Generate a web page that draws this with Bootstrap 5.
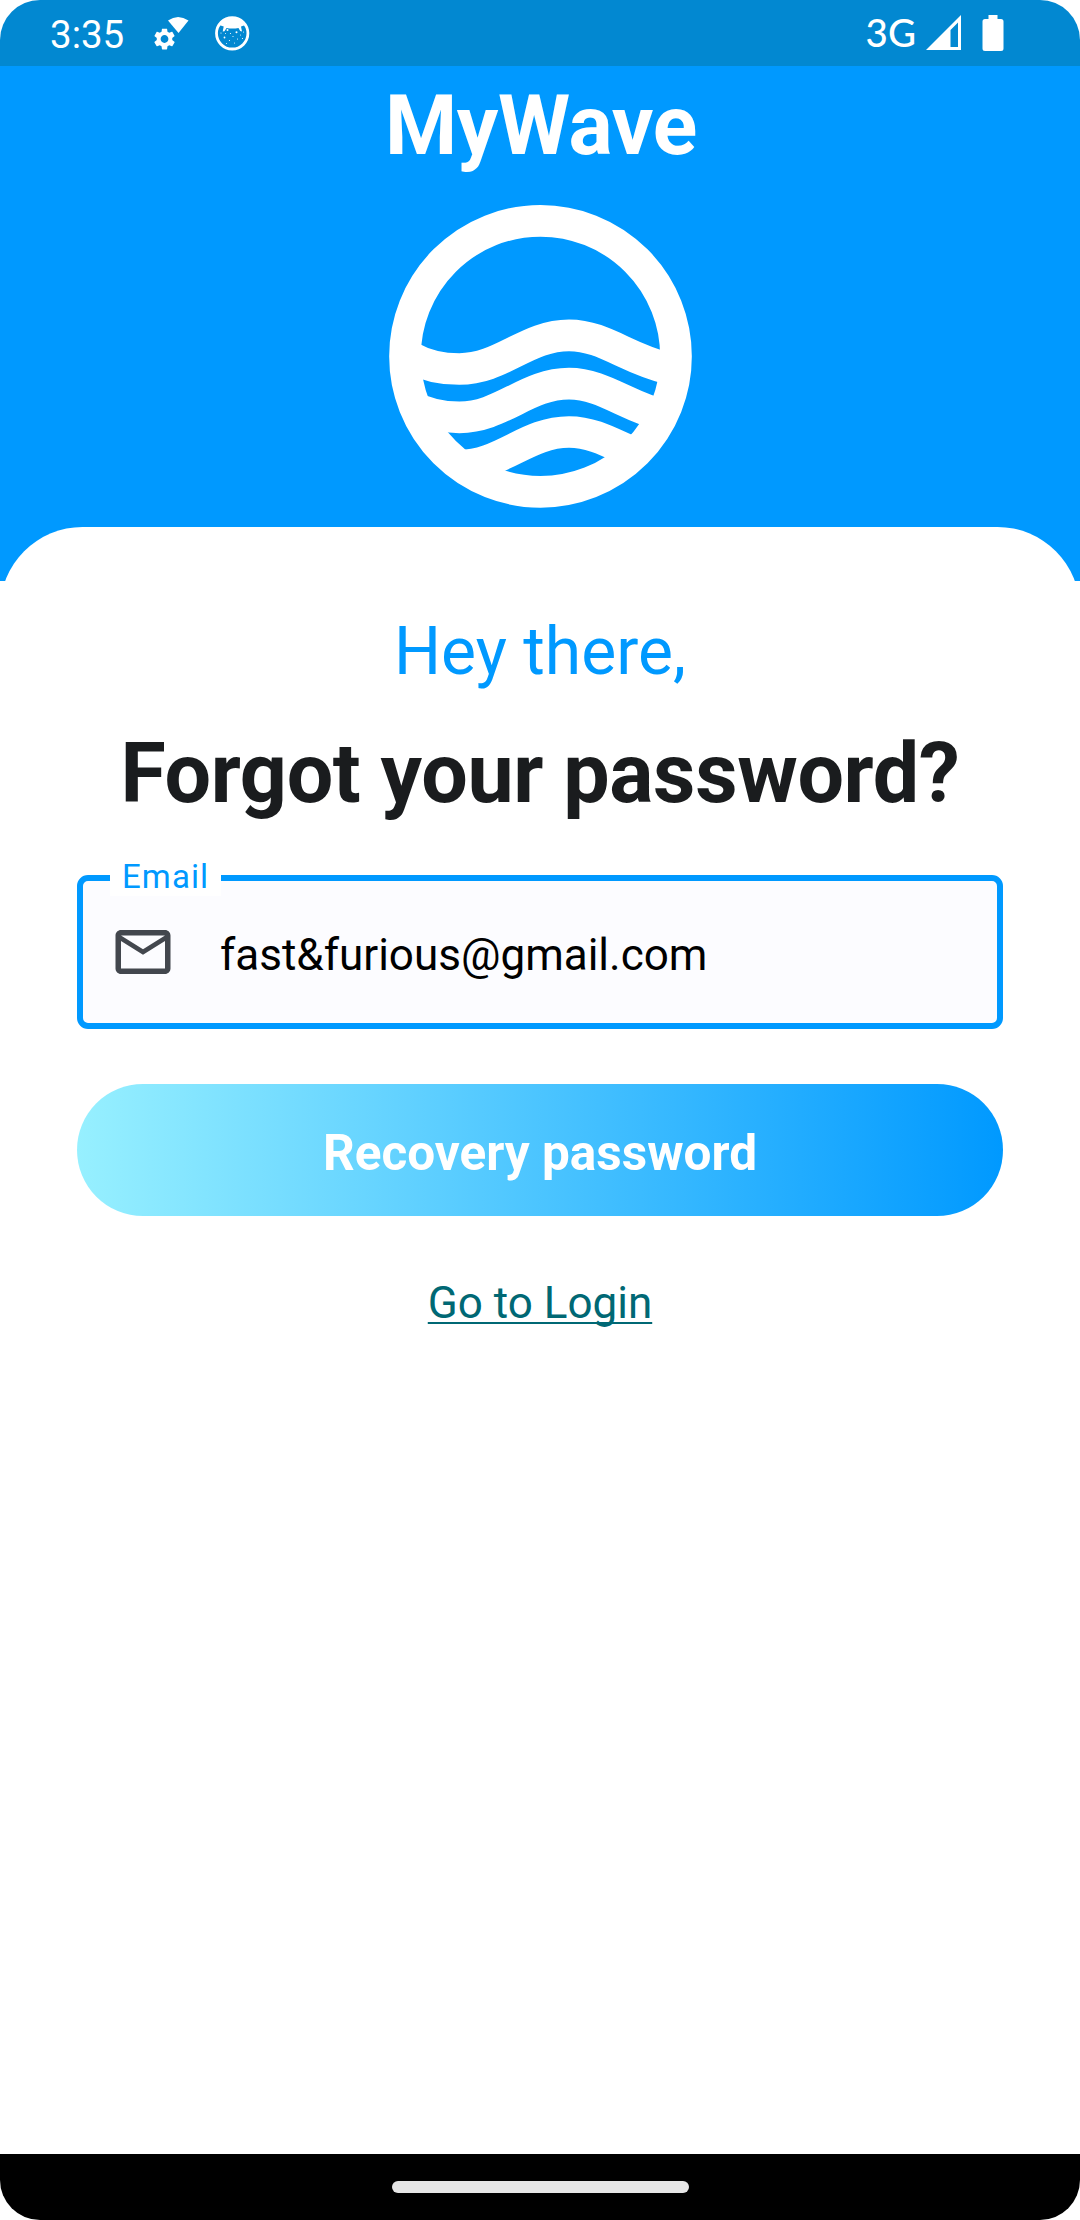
<!DOCTYPE html>
<html lang="en">
<head>
<meta charset="utf-8">
<meta name="viewport" content="width=device-width, initial-scale=1">
<title>MyWave – Forgot your password?</title>
<link href="https://cdn.jsdelivr.net/npm/bootstrap@5.3.0/dist/css/bootstrap.min.css" rel="stylesheet">
<style>
  body { font-family: Roboto, "Liberation Sans", sans-serif; background: #fff; }
  svg { display: block; flex: none; }
  .device { width: 1080px; height: 2220px; border-radius: 40px; background: #fff; }
  .status-bar { height: 66px; background: #0288d1; padding: 0 76px 0 50px; color: #fff; font-size: 38.5px; line-height: 66px; }
  .clock { width: 101px; padding-top: 3px; }
  .robot-icon { margin-left: 23px; }
  .net-type { font-family: Lato, Roboto, sans-serif; font-size: 38.5px; font-weight: 500; padding-bottom: 2px; }
  .signal-icon { margin-left: 10px; }
  .battery-icon { margin-left: 20px; }
  .brand-area { height: 515px; background: #09f; padding-top: 10px; }
  .brand-title { font-size: 82.5px; line-height: 100px; margin: 0 0 19px; letter-spacing: -.3px; padding-left: 2px; }
  .sheet { margin-top: -54px; padding: 85px 77px 0; border-radius: 82.5px 82.5px 0 0; background: #fff; }
  .greeting { font-size: 66px; line-height: 80px; color: #09f; margin: 0 0 32px; }
  .headline { font-size: 82.5px; line-height: 100px; color: #1a1c1e; margin: 0 0 51px; letter-spacing: -.35px; }
  .email-field { height: 154px; border: 6px solid #09f; border-radius: 11px; background: #fcfcff; padding-left: 27px; }
  .email-label { left: 27px; top: -26px; width: 111px; height: 41px; line-height: 44px; padding-left: 12px; background: #fff; color: #09f; font-size: 33px; letter-spacing: 1.1px; }
  .email-value { font-size: 44px; color: #000; margin-left: 44px; line-height: 52px; padding-top: 5px; }
  .btn-recover { height: 132px; margin-top: 55px; border: 0; border-radius: 66px; font-size: 49.5px; line-height: 60px; padding: 6px 0 0; color: #fff; background: linear-gradient(90deg, #97f0ff, #09f); }
  .login-link { margin-top: 61px; font-size: 44px; line-height: 52px; color: #006874; text-decoration-skip-ink: none; text-decoration-thickness: 2px; text-underline-offset: 4px; }
  .nav-strip { height: 66px; background: #000; }
  .home-pill { width: 297px; height: 12px; border-radius: 6px; background: #e6e6e6; }
</style>
</head>
<body>
<div class="device d-flex flex-column overflow-hidden">
  <header class="status-bar d-flex align-items-center">
    <span class="clock">3:35</span>
    <svg width="40" height="40" viewBox="0 0 40 40" fill="#fff">
      <path d="M17 7.500Q27 .5 37.500 7.500L27.500 20Z"/>
      <path transform="translate(.55 13.050) scale(1.080)" d="M19.140 12.940c.04-.3.060-.61.060-.94 0-.32-.02-.64-.07-.94l2.030-1.580c.18-.14.230-.41.120-.61l-1.920-3.320c-.12-.22-.37-.29-.59-.22l-2.390.96c-.5-.38-1.030-.7-1.620-.94l-.36-2.540c-.04-.24-.24-.41-.48-.41h-3.840c-.24 0-.43.170-.47.410l-.36 2.540c-.59.240-1.130.570-1.620.940l-2.390-.96c-.22-.08-.47 0-.59.220L2.740 8.870c-.12.210-.08.470.120.610l2.030 1.580c-.05.3-.09.630-.09.940s.020.640.070.940l-2.030 1.580c-.18.140-.23.410-.12.610l1.920 3.320c.120.220.370.290.590.220l2.390-.96c.5.380 1.030.7 1.620.940l.36 2.540c.050.240.240.410.480.410h3.840c.24 0 .44-.17.470-.41l.36-2.540c.59-.24 1.130-.56 1.620-.94l2.390.96c.22.080.470 0 .59-.22l1.920-3.320c.12-.22.070-.47-.12-.61l-2.010-1.580zM12 15.600c-1.980 0-3.600-1.620-3.600-3.600s1.620-3.600 3.600-3.600 3.600 1.620 3.600 3.600-1.620 3.600-3.600 3.600z"/>
    </svg>
    <svg class="robot-icon" width="36" height="36" viewBox="0 0 36 36" fill="#fff">
      <circle cx="18.200" cy="18.300" r="15.700" fill="none" stroke="#fff" stroke-width="2.800"/>
      <path d="M5 10Q9 2 18 2t13.500 8l-4.500 1.500 1 5-1.800-.4-1.700-3.100-3 .6h-6l-3-.6-2 3.200-1.800.3 1-5z"/>
      <circle cx="13.500" cy="15" r="1"/><circle cx="22.500" cy="17.300" r="1"/><circle cx="10.500" cy="22.500" r=".9"/><circle cx="7" cy="18" r=".6"/><circle cx="11.500" cy="18.500" r=".5"/><circle cx="16.500" cy="18.500" r=".6"/><circle cx="19" cy="21.500" r=".6"/><circle cx="26.500" cy="20" r=".5"/><circle cx="23.500" cy="24" r=".6"/><circle cx="28.500" cy="23.500" r=".6"/><circle cx="15.500" cy="25.500" r=".6"/><circle cx="20.500" cy="28" r=".5"/><circle cx="12.500" cy="28.500" r=".5"/><circle cx="29.500" cy="17" r=".5"/>
    </svg>
    <span class="net-type ms-auto">3G</span>
    <svg class="signal-icon" width="36" height="36" viewBox="0 0 36 36"><path fill="#fff" fill-rule="evenodd" d="M0 35L35 0v35zM24.500 15v17H32V7.500z"/></svg>
    <svg class="battery-icon" width="22" height="36" viewBox="0 0 22 36"><path fill="#fff" d="M6.500 0h9v4H19q2.500 0 2.500 2.500v27Q21.500 36 19 36H3Q.5 36 .5 33.500v-27Q.5 4 3 4h3.500z"/></svg>
  </header>

  <section class="brand-area text-white d-flex flex-column align-items-center flex-shrink-0">
    <h1 class="brand-title fw-bold">MyWave</h1>
    <svg width="320" height="320" viewBox="0 0 960 960" role="img" aria-label="MyWave logo">
      <clipPath id="disc"><circle cx="481.500" cy="484" r="400"/></clipPath>
      <g fill="none" stroke="#fff" stroke-width="95">
        <circle cx="481.500" cy="484" r="406.500"/>
        <g clip-path="url(#disc)">
          <path d="M95 488C140 514 190 522 238 522C365 522 440 421 567 421C670 421 740 491 860 519"/>
          <path d="M95 633C140 659 190 667 238 667C365 667 440 566 567 566C670 566 740 636 860 664"/>
          <path d="M95 778C140 804 190 812 238 812C365 812 440 711 567 711C670 711 740 781 860 809"/>
        </g>
      </g>
    </svg>
  </section>

  <main class="sheet flex-grow-1 d-flex flex-column text-center">
    <p class="greeting">Hey there,</p>
    <h2 class="headline fw-bold text-nowrap">Forgot your password?</h2>
    <div class="email-field position-relative d-flex align-items-center text-start">
      <span class="email-label position-absolute">Email</span>
      <svg width="66" height="66" viewBox="0 0 24 24" fill="#43474e"><path d="M22 6c0-1.100-.9-2-2-2H4c-1.100 0-2 .9-2 2v12c0 1.100.9 2 2 2h16c1.100 0 2-.9 2-2V6zm-2 0l-8 5-8-5h16zm0 12H4V8l8 5 8-5v10z"/></svg>
      <span class="email-value">fast&amp;furious@gmail.com</span>
    </div>
    <button type="button" class="btn btn-recover fw-bold">Recovery password</button>
    <a href="#" class="login-link align-self-center">Go to Login</a>
  </main>

  <footer class="nav-strip d-flex align-items-center justify-content-center flex-shrink-0">
    <div class="home-pill"></div>
  </footer>
</div>
<script src="https://cdn.jsdelivr.net/npm/bootstrap@5.3.0/dist/js/bootstrap.bundle.min.js"></script>
</body>
</html>
